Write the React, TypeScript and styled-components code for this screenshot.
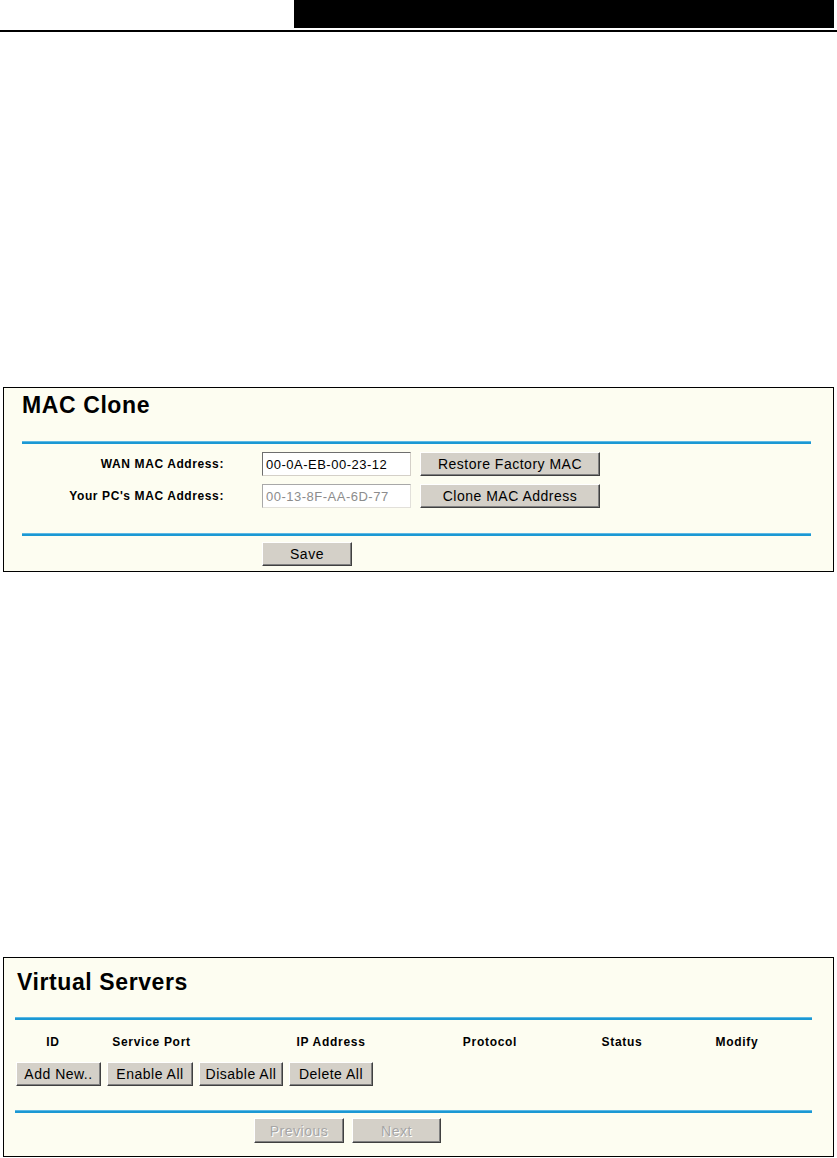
import React from "react";
import styled, { createGlobalStyle } from "styled-components";

const Global = createGlobalStyle`
  html, body { margin: 0; padding: 0; background: #fff; }
  body { font-family: "Liberation Sans", Arial, sans-serif; color: #000; }
  * { box-sizing: border-box; }
`;

const Page = styled.div`
  width: 837px;
  display: flex;
  flex-direction: column;
`;

const Header = styled.header`
  display: flex;
  flex-direction: column;
`;

const HeaderBar = styled.div`
  display: flex;
  justify-content: flex-end;
  padding-right: 3px;
`;

const BlackBlock = styled.div`
  width: 540px;
  height: 28px;
  background: #000;
`;

const HeaderRule = styled.div`
  margin-top: 2px;
  height: 2px;
  background: #000;
`;

const Panel = styled.section<{ $top: number; $padTop: number; $padBottom: number }>`
  margin-top: ${(p) => p.$top}px;
  margin-left: 3px;
  width: 831px;
  border: 1px solid #000;
  background: #fdfdf1;
  padding-top: ${(p) => p.$padTop}px;
  padding-bottom: ${(p) => p.$padBottom}px;
  display: flex;
  flex-direction: column;
`;

const Title = styled.h1<{ $left: number }>`
  margin: 0;
  padding-left: ${(p) => p.$left}px;
  font-size: 23px;
  line-height: 26px;
  font-weight: bold;
  letter-spacing: 0.6px;
`;

const Rule = styled.div<{ $left: number; $width: number; $top: number }>`
  margin-top: ${(p) => p.$top}px;
  margin-left: ${(p) => p.$left}px;
  width: ${(p) => p.$width}px;
  height: 3px;
  background: #1b98d3;
  border-top: 1px solid #5cb8e4;
`;

const FormGrid = styled.div`
  margin-top: 8px;
  margin-left: 18px;
  display: grid;
  grid-template-columns: 231px 149px 180px;
  grid-auto-rows: 24px;
  column-gap: 9px;
  row-gap: 8px;
  align-items: center;
`;

const Label = styled.label`
  text-align: right;
  padding-right: 29px;
  font-size: 12px;
  font-weight: bold;
  letter-spacing: 0.6px;
  white-space: nowrap;
`;

const TextInput = styled.input`
  width: 149px;
  height: 24px;
  padding: 0 0 0 3px;
  font-family: "Liberation Sans", Arial, sans-serif;
  font-size: 13px;
  letter-spacing: 0.5px;
  color: #000;
  background: #fff;
  border: 1px solid;
  border-color: #6e6e6e #d4d0c8 #d4d0c8 #6e6e6e;
  outline: none;
  &:disabled {
    color: #8c8c8c;
    background: #fff;
    border-color: #a8a8a8 #e2e0da #e2e0da #a8a8a8;
  }
`;

const Button = styled.button<{ $w: number; $h?: number }>`
  width: ${(p) => p.$w}px;
  height: ${(p) => p.$h ?? 24}px;
  padding: 0;
  font-family: "Liberation Sans", Arial, sans-serif;
  font-size: 14px;
  letter-spacing: 0.5px;
  color: #000;
  background: #d4d0c8;
  border: 1px solid;
  border-color: #ffffff #404040 #404040 #ffffff;
  box-shadow: inset -1px -1px 0 #808080;
  white-space: nowrap;
  &:disabled {
    color: #a6a6a6;
    text-shadow: 1px 1px 0 #ffffff;
  }
`;

const ActionRow = styled.div<{ $left: number; $top: number; $gap: number }>`
  margin-top: ${(p) => p.$top}px;
  padding-left: ${(p) => p.$left}px;
  display: flex;
  gap: ${(p) => p.$gap}px;
`;

const TableHead = styled.div`
  margin-top: 14px;
  margin-left: 11px;
  display: grid;
  grid-template-columns: 76px 121px 238px 80px 184px 46px;
  height: 16px;
`;

const HeadCell = styled.div`
  text-align: center;
  font-size: 12px;
  line-height: 16px;
  font-weight: bold;
  letter-spacing: 0.7px;
  white-space: nowrap;
`;

const headers = ["ID", "Service Port", "IP Address", "Protocol", "Status", "Modify"];

export default function App() {
  return (
    <Page>
      <Global />
      <Header>
        <HeaderBar>
          <BlackBlock />
        </HeaderBar>
        <HeaderRule />
      </Header>

      <Panel $top={355} $padTop={4} $padBottom={5}>
        <Title $left={18}>MAC Clone</Title>
        <Rule $left={18} $width={789} $top={23} />
        <FormGrid>
          <Label>WAN MAC Address:</Label>
          <TextInput defaultValue="00-0A-EB-00-23-12" />
          <Button $w={180}>Restore Factory MAC</Button>
          <Label>Your PC's MAC Address:</Label>
          <TextInput defaultValue="00-13-8F-AA-6D-77" disabled />
          <Button $w={180}>Clone MAC Address</Button>
        </FormGrid>
        <Rule $left={18} $width={789} $top={25} />
        <ActionRow $left={258} $top={6} $gap={0}>
          <Button $w={90}>Save</Button>
        </ActionRow>
      </Panel>

      <Panel $top={385} $padTop={11} $padBottom={13}>
        <Title $left={13}>Virtual Servers</Title>
        <Rule $left={11} $width={797} $top={22} />
        <TableHead>
          {headers.map((h) => (
            <HeadCell key={h}>{h}</HeadCell>
          ))}
        </TableHead>
        <ActionRow $left={12} $top={12} $gap={6}>
          <Button $w={85}>Add New..</Button>
          <Button $w={86}>Enable All</Button>
          <Button $w={84}>Disable All</Button>
          <Button $w={84}>Delete All</Button>
        </ActionRow>
        <Rule $left={11} $width={797} $top={24} />
        <ActionRow $left={250} $top={5} $gap={8}>
          <Button $w={90} $h={25} disabled>Previous</Button>
          <Button $w={89} $h={25} disabled>Next</Button>
        </ActionRow>
      </Panel>
    </Page>
  );
}
